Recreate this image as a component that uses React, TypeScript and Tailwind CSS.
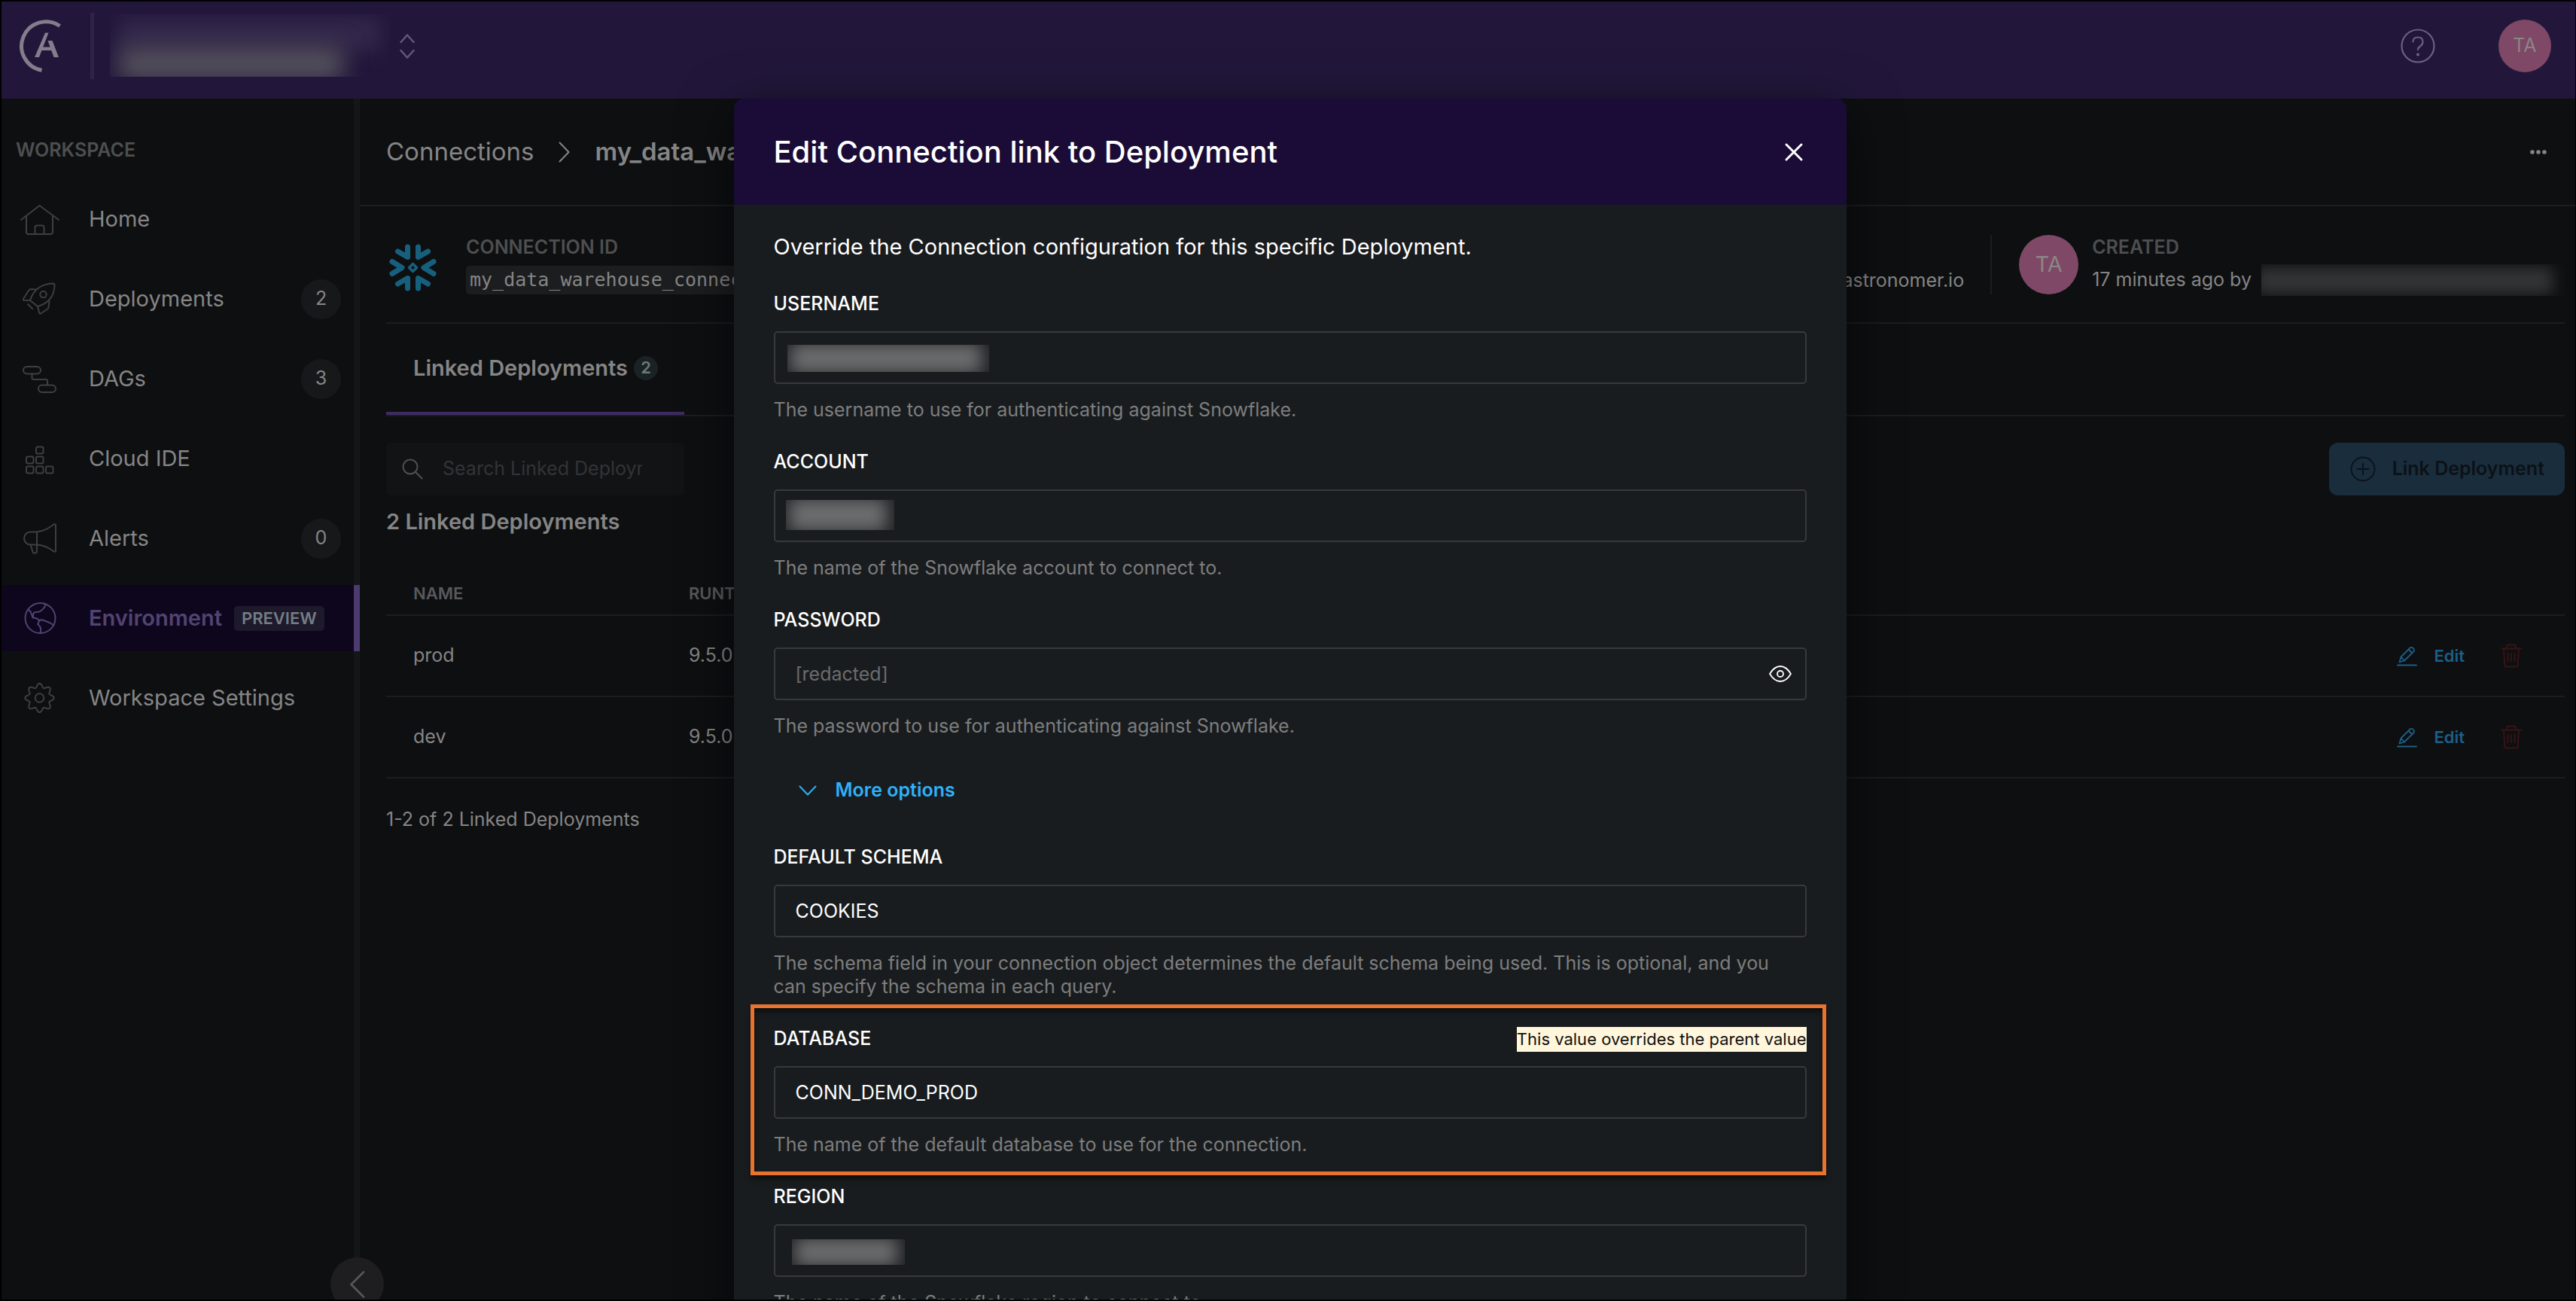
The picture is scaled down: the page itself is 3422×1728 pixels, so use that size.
import type { ReactNode } from 'react';

function Icon({ children, className = 'size-[52px]' }: { children: ReactNode; className?: string }) {
  return (
    <svg
      viewBox="0 0 52 52"
      className={className}
      fill="none"
      stroke="currentColor"
      strokeWidth="2"
      strokeLinecap="round"
      strokeLinejoin="round"
      aria-hidden="true"
    >
      {children}
    </svg>
  );
}

const gearPath =
  Array.from({ length: 160 }, (_, i) => {
    const angle = (i / 160) * Math.PI * 2;
    const radius = 16.6 + 2.6 * Math.cos(8 * angle);
    const x = (25.5 + radius * Math.sin(angle)).toFixed(2);
    const y = (26 - radius * Math.cos(angle)).toFixed(2);
    return `${i === 0 ? 'M' : 'L'}${x} ${y}`;
  }).join('') + 'Z';

const icons = {
  home: (
    <>
      <path d="M1 27 25.500 8 51 27" />
      <path d="M8 22v21q0 3 3 3h29q3 0 3-3V22" />
      <path d="M19.500 46V37q0-2.500 2.500-2.500h7q2.500 0 2.500 2.500v9" />
    </>
  ),
  rocket: (
    <>
      <path d="M13 28C17 15 27 6 43 5.500q2.500 0 2.500 2.500C45 23 37 32 23 36Z" />
      <circle cx="30.500" cy="20" r="4.200" />
      <path d="M21 13.500 14 13q-2 0-3 2L4 26q-.5 1.500 1 1.700l8 .3" />
      <path d="M38.500 29 37.500 37q0 1.500-1.500 2.500l-9 6q-1.500.5-1.800-1L23 36" />
      <path d="m10 33 6 6" />
    </>
  ),
  dag: (
    <>
      <rect x="4" y="10" width="23" height="9.500" rx="4.700" />
      <rect x="24" y="34.500" width="23" height="9.500" rx="4.700" />
      <path d="M15.500 19.500V25q0 2 2 2H34q2 0 2 2v5.500" />
    </>
  ),
  blocks: (
    <>
      <rect x="21" y="10.500" width="9.500" height="9" rx="2" />
      <rect x="8" y="23.500" width="9.500" height="9" rx="2" />
      <rect x="21" y="23.500" width="9.500" height="9" rx="2" />
      <rect x="8" y="36.500" width="9.500" height="9" rx="2" />
      <rect x="21" y="36.500" width="9.500" height="9" rx="2" />
      <rect x="34" y="36.500" width="9.500" height="9" rx="2" />
    </>
  ),
  horn: (
    <>
      <path d="M22 17.500C32 16.500 38 12 44.500 7.500Q47 6.500 47 9v33q0 2.500-2.500 1.500C38 38.500 32 35 22 34.500H13.500a8.500 8.500 0 0 1 0-17Z" />
      <path d="M22 17.500V34.500" />
      <path d="m13.500 34.500 3 9.500q.5 2 2.500 1.800Q22 45.500 22 43v-8.500" />
    </>
  ),
  globe: (
    <>
      <circle cx="26.500" cy="26" r="20" />
      <path d="M9.500 15q3 0 4.500 3.500l2.500 7q1-1 .5-4 0-3 4-3.500 4 0 6-1.500 3-2 5-5 3-3-1-5" />
      <path d="M44.500 35.500Q38 31 31 29q-3-1.500-5 0-2-.5-4-2.500l-4.500-1M26 29q-2 1-2 3t-1 2q4 3 4 6 .5 3-.5 6" />
    </>
  ),
  gear: (
    <>
      <path d={gearPath} />
      <circle cx="25.500" cy="26" r="5.800" />
    </>
  ),
};

type NavItem = { label: string; icon: ReactNode; count?: number; active?: boolean };

const navItems: NavItem[] = [
  { label: 'Home', icon: icons.home },
  { label: 'Deployments', icon: icons.rocket, count: 2 },
  { label: 'DAGs', icon: icons.dag, count: 3 },
  { label: 'Cloud IDE', icon: icons.blocks },
  { label: 'Alerts', icon: icons.horn, count: 0 },
  { label: 'Environment', icon: icons.globe, active: true },
  { label: 'Workspace Settings', icon: icons.gear },
];

function Logo() {
  return (
    <svg viewBox="0 0 56 72" className="h-[72px] w-14" fill="none" aria-label="Astronomer" role="img">
      <path d="M54.500 9.500A32.500 32.500 0 1 0 30.500 68.300" stroke="#847d8c" strokeWidth="5" />
      <path d="M35 18.500h4.500L27 51h-6Z M38.500 29h6L53 51h-6.500Z M28 37.500h18v4.500H26Z" fill="#847d8c" />
    </svg>
  );
}

function SnowflakeLogo() {
  return (
    <svg viewBox="0 0 65 65" className="mt-2 ml-[3px] size-[65px] shrink-0 text-[#17607d]" fill="none" stroke="currentColor" strokeWidth="7" strokeLinecap="round" strokeLinejoin="round" aria-hidden="true">
      <path d="M25.500 5v13.500L12.500 11M39.500 5v13.500L52.500 11" />
      <path d="M25.500 60V46.500L12.500 54M39.500 60V46.500L52.500 54" />
      <path d="M5 24.500 18 32.500 5 40.500M60 24.500 47 32.500 60 40.500" />
      <path d="m32.500 27.500 5 5-5 5-5-5Z" strokeWidth="3.500" />
    </svg>
  );
}

function Avatar({ className }: { className: string }) {
  return (
    <span className={`flex shrink-0 items-center justify-center rounded-full bg-[#7e4866] text-[#8c8585] ${className}`}>
      TA
    </span>
  );
}

function TopBar() {
  return (
    <header className="flex h-[129px] shrink-0 items-center bg-[#22173b] pr-8 pb-3 pl-[23px]">
      <Logo />
      <div className="ml-[39px] h-22 w-[5px] bg-[#2f2447]" />
      <div className="relative ml-[21px] h-[83px] w-[372px] overflow-hidden">
        <div className="absolute inset-x-3 top-1 h-11 bg-[#33274a] blur-[12px]" />
        <div className="absolute top-[44px] right-[62px] left-3 h-11 bg-[#54515c] blur-[15px]" />
      </div>
      <button type="button" aria-label="Switch organization" className="ml-[13px] text-[#63577a]">
        <svg viewBox="0 0 20 34" className="h-[34px] w-5" fill="none" stroke="currentColor" strokeWidth="2.500" strokeLinecap="round" strokeLinejoin="round">
          <path d="m1.500 12 8.500-9.500 8.500 9.500M1.500 23 10 32.500 18.500 23" />
        </svg>
      </button>
      <button type="button" aria-label="Help" className="ml-auto text-[#6c6080]">
        <svg viewBox="0 0 46 46" className="size-[46px]" fill="none" stroke="currentColor" strokeWidth="2.200" strokeLinecap="round">
          <circle cx="23" cy="23" r="21.500" />
          <path d="M16.500 17.500q0-6 6.500-6t6.500 6q0 3.500-3.500 6-3 2-3 4.500" />
          <circle cx="23" cy="34.500" r="1" fill="currentColor" stroke="currentColor" />
        </svg>
      </button>
      <Avatar className="ml-[84px] size-[70px] text-[25px]" />
    </header>
  );
}

function Sidebar() {
  return (
    <aside className="relative w-[476px] shrink-0 border-r-8 border-[#151617] bg-[#0e0f11] pt-[52px]">
      <h2 className="mb-8 pl-[19px] text-[25px] leading-8 font-semibold text-[#4d4f50]">WORKSPACE</h2>
      <nav className="-mr-2 flex flex-col gap-[18px]">
        {navItems.map((item) => (
          <a
            key={item.label}
            href="#"
            className={`flex h-[88px] items-center border-r-8 pr-[17px] pl-[25px] text-[29px] ${
              item.active ? 'border-[#4d3a6e] bg-[#0e061d] font-semibold text-[#514372]' : 'border-transparent text-[#858585]'
            }`}
          >
            <span className={item.active ? 'text-[#514372]' : 'text-[#3d3f40]'}>
              <Icon>{item.icon}</Icon>
            </span>
            <span className="ml-[39px]">{item.label}</span>
            {item.active && (
              <span className="ml-4 flex h-[33px] items-center rounded-[5px] bg-[#1e192b] px-2.5 text-[22px] font-semibold text-[#737d85]">
                PREVIEW
              </span>
            )}
            {item.count !== undefined && (
              <span className="ml-auto flex size-[53px] items-center justify-center rounded-full bg-[#17181a] text-[25px]">
                {item.count}
              </span>
            )}
          </a>
        ))}
      </nav>
      <button
        type="button"
        aria-label="Collapse sidebar"
        className="absolute -right-10 -bottom-[15px] z-10 flex size-[71px] items-center justify-center rounded-full bg-[#1e1e20] text-[#58585a]"
      >
        <svg viewBox="0 0 20 36" className="h-9 w-5" fill="none" stroke="currentColor" strokeWidth="2.500" strokeLinecap="round" strokeLinejoin="round">
          <path d="M18 1.500 1.500 18 18 34.500" />
        </svg>
      </button>
    </aside>
  );
}

function RowActions() {
  return (
    <div className="flex items-center justify-end pr-[57px]">
      <button type="button" className="flex items-center gap-[22px] text-[22px] font-semibold text-[#1b5f87]">
        <svg viewBox="0 0 27 27" className="size-[27px]" fill="none" stroke="currentColor" strokeWidth="1.800" strokeLinecap="round" strokeLinejoin="round" aria-hidden="true">
          <path d="M1 25.500h25M3.500 21.500l2-7L17.500 2.500q2-1.500 4.300.5 2 2.300.5 4.300L10 19.500Zm2-7 4.500 5M15.500 4.500l5 5" />
        </svg>
        Edit
      </button>
      <button type="button" aria-label="Delete" className="ml-12 text-[#3a1415]">
        <svg viewBox="0 0 28 32" className="h-8 w-7" fill="none" stroke="currentColor" strokeWidth="1.800" strokeLinecap="round" strokeLinejoin="round">
          <path d="M1 6.500h26M8 6.500V4q0-2.500 2.500-2.500h7Q20 1.500 20 4v2.500M4 6.500l1.200 22q.1 2 2 2h13.600q1.900 0 2-2L24 6.500M9.500 13v10M14 13v10M18.500 13v10" />
        </svg>
      </button>
    </div>
  );
}

const deployments = [
  { name: 'prod', runtime: '9.5.0' },
  { name: 'dev', runtime: '9.5.0' },
];

function Main() {
  return (
    <main className="min-w-0 flex-1 bg-[#0e0f11] text-[#858585]">
      <div className="flex h-[143px] items-center border-b-2 border-[#1c1d1f] pr-[38px] pl-[35px] text-[33px] whitespace-nowrap">
        <a href="#">Connections</a>
        <svg viewBox="0 0 15 28" className="mr-[33px] ml-[33px] h-7 w-[15px]" fill="none" stroke="currentColor" strokeWidth="2" strokeLinecap="round" strokeLinejoin="round" aria-hidden="true">
          <path d="m1.500 1.500 12 12.500-12 12.500" />
        </svg>
        <span className="font-semibold">my_data_warehouse_connection</span>
        <button type="button" aria-label="More actions" className="ml-auto">
          <svg viewBox="0 0 22 8" className="h-2 w-[22px]" fill="currentColor">
            <circle cx="3" cy="4" r="2.800" />
            <circle cx="11" cy="4" r="2.800" />
            <circle cx="19" cy="4" r="2.800" />
          </svg>
        </button>
      </div>

      <div className="pr-3.5 pl-[35px]">
        <section className="flex h-[156px] items-center border-b-2 border-[#1c1d1f] text-[25px] whitespace-nowrap">
          <SnowflakeLogo />
          <div className="ml-[38px] flex flex-col items-start gap-[9px]">
            <span className="leading-8 font-semibold text-[#4d4f50]">CONNECTION ID</span>
            <code className="flex h-[38px] items-center rounded-[5px] bg-[#1c1d1f] px-[5px] font-['DejaVu_Sans_Mono',monospace] text-[25px]">
              my_data_warehouse_connection
            </code>
          </div>
          <span className="mt-[41px] ml-auto leading-[38px]">astronomer.io</span>
          <div className="mr-9 ml-[35px] h-[79px] w-0.5 bg-[#1c1d1f]" />
          <Avatar className="size-[79px] text-[29px]" />
          <div className="ml-[18px] flex flex-col gap-[9px]">
            <span className="leading-8 font-semibold text-[#4d4f50]">CREATED</span>
            <span className="flex h-[38px] items-center">
              17 minutes ago by
              <span className="relative ml-[13px] block h-[42px] w-[403px] overflow-hidden">
                <span className="absolute top-1 right-4 -left-2 block h-9 bg-[#343536] blur-[10px]" />
              </span>
            </span>
          </div>
        </section>

        <div role="tablist" className="flex h-[123px] border-b-2 border-[#1c1d1f]">
          <button type="button" role="tab" aria-selected="true" className="flex items-center gap-2 border-b-4 border-[#3f2b63] pr-[35px] pl-9 text-[29px] font-semibold">
            Linked Deployments
            <span className="flex size-8 items-center justify-center rounded-full bg-[#1b2223] text-[22px] text-[#6a7a78]">2</span>
          </button>
        </div>

        <div className="mt-[35px] flex justify-between">
          <label className="flex h-[70px] w-[396px] items-center rounded-[5px] bg-[#121315] pr-14 pl-[21px] text-[#4f5152]">
            <span className="sr-only">Search Linked Deployments</span>
            <svg viewBox="0 0 28 28" className="size-7 shrink-0" fill="none" stroke="currentColor" strokeWidth="2" strokeLinecap="round" aria-hidden="true">
              <circle cx="11" cy="11" r="9.500" />
              <path d="m18 18 8.500 8.500" />
            </svg>
            <input type="text" placeholder="Search Linked Deployments" className="ml-[26px] w-full min-w-0 bg-transparent text-[25px] placeholder:text-[#333435]" />
          </label>
          <button type="button" className="flex h-[70px] items-center gap-[22px] rounded-xl bg-[#192d3d] pr-[27px] pl-7 text-[25px] font-semibold text-[#0d1116]">
            <svg viewBox="0 0 34 34" className="size-[34px]" fill="none" stroke="currentColor" strokeWidth="1.800" strokeLinecap="round" aria-hidden="true">
              <circle cx="17" cy="17" r="15.500" />
              <path d="M9.500 17h15M17 9.500v15" />
            </svg>
            Link Deployment
          </button>
        </div>

        <h3 className="mt-[18px] text-[29px] leading-[34px] font-semibold">2 Linked Deployments</h3>

        <table className="mt-[51px] w-full border-collapse text-left text-[25px]">
          <thead>
            <tr className="h-14 border-b-2 border-[#1c1d1f] text-[22px] text-[#58595b]">
              <th scope="col" className="w-[402px] pl-9 font-semibold">NAME</th>
              <th scope="col" className="font-semibold">RUNTIME</th>
              <th scope="col" aria-label="Actions" />
            </tr>
          </thead>
          <tbody>
            {deployments.map((deployment) => (
              <tr key={deployment.name} className="h-[108px] border-b-2 border-[#1c1d1f]">
                <td className="pl-9">{deployment.name}</td>
                <td>{deployment.runtime}</td>
                <td>
                  <RowActions />
                </td>
              </tr>
            ))}
          </tbody>
        </table>
        <p className="mt-[38px] text-[25px] leading-8">1-2 of 2 Linked Deployments</p>
      </div>
    </main>
  );
}

type FieldProps = {
  id: string;
  label: string;
  help: string;
  value?: string;
  placeholder?: string;
  type?: string;
  badge?: string;
  mask?: ReactNode;
  trailing?: ReactNode;
};

function Field({ id, label, help, value, placeholder, type = 'text', badge, mask, trailing }: FieldProps) {
  return (
    <div>
      <div className="mb-5 flex h-8 items-center justify-between">
        <label htmlFor={id} className="text-[25px] font-medium text-white">
          {label}
        </label>
        {badge && <span className="bg-[#fff6db] text-[22px] leading-[33px] text-[#111111]">{badge}</span>}
      </div>
      <div className="relative">
        <input
          id={id}
          type={type}
          defaultValue={value}
          placeholder={placeholder}
          className="block h-[70px] w-full rounded-[5px] border-2 border-[#37393c] bg-transparent px-[27px] text-[25px] text-white placeholder:text-[#6b6c6d]"
        />
        {mask}
        {trailing}
      </div>
      <p className="mt-[19px] text-[25px] leading-[31px] text-[#7d7e7f]">{help}</p>
    </div>
  );
}

function Mask({ className }: { className: string }) {
  return (
    <div className={`absolute overflow-hidden bg-[#1f2123] ${className}`}>
      <div className="absolute -inset-y-0.5 right-2.5 left-1 bg-[#6c6d6e] blur-[11px]" />
    </div>
  );
}

function EditModal() {
  return (
    <div className="absolute inset-0 z-20 flex justify-center overflow-hidden pt-[129px] pl-1">
      <form
        role="dialog"
        aria-label="Edit Connection link to Deployment"
        className="h-[1700px] w-[1478px] shrink-0 overflow-hidden rounded-t-[14px] bg-[#191c1e] text-white shadow-[0_16px_70px_rgba(0,0,0,0.6)]"
      >
        <div className="flex h-[141px] items-center justify-between bg-[#1a0c36] pr-[57px] pl-[53px]">
          <h1 className="text-[40px] font-medium">Edit Connection link to Deployment</h1>
          <button type="button" aria-label="Close">
            <svg viewBox="0 0 26 26" className="size-[26px]" fill="none" stroke="currentColor" strokeWidth="3" strokeLinecap="round">
              <path d="m3 3 20 20M23 3 3 23" />
            </svg>
          </button>
        </div>
        <div className="flex flex-col pt-10 pr-[53px] pl-[53px]">
          <p className="mb-11 text-[29px] leading-8">Override the Connection configuration for this specific Deployment.</p>
          <div className="flex flex-col gap-[38px]">
            <Field id="username" label="USERNAME" help="The username to use for authenticating against Snowflake." mask={<Mask className="top-[18px] left-[18px] h-9 w-[268px]" />} />
            <Field id="account" label="ACCOUNT" help="The name of the Snowflake account to connect to." mask={<Mask className="top-[14px] left-4 h-10 w-36" />} />
            <Field
              id="password"
              type="password"
              label="PASSWORD"
              placeholder="[redacted]"
              help="The password to use for authenticating against Snowflake."
              trailing={
                <button type="button" aria-label="Show password" className="absolute inset-y-0 right-5 flex items-center">
                  <svg viewBox="0 0 30 24" className="h-6 w-[30px]" fill="none" stroke="currentColor" strokeWidth="1.800" strokeLinejoin="round">
                    <path d="M1 12Q7 2 15 2t14 10Q23 22 15 22T1 12Z" />
                    <circle cx="15" cy="12" r="4" />
                  </svg>
                </button>
              }
            />
          </div>
          <button type="button" className="mt-[46px] mb-[49px] flex h-12 items-center gap-[25px] self-start pl-[33px] text-[25px] font-semibold text-[#2fb1f8]">
            <svg viewBox="0 0 24 14" className="h-3.5 w-6" fill="none" stroke="currentColor" strokeWidth="2" strokeLinecap="round" strokeLinejoin="round" aria-hidden="true">
              <path d="m1.500 1.500 10.500 11 10.500-11" />
            </svg>
            More options
          </button>
          <div className="flex flex-col gap-[38px]">
            <Field
              id="schema"
              label="DEFAULT SCHEMA"
              value="COOKIES"
              help="The schema field in your connection object determines the default schema being used. This is optional, and you can specify the schema in each query."
            />
            <div className="relative">
              <Field
                id="database"
                label="DATABASE"
                value="CONN_DEMO_PROD"
                badge="This value overrides the parent value"
                help="The name of the default database to use for the connection."
              />
              <div className="pointer-events-none absolute -top-[30px] -right-[26px] -bottom-[25px] -left-[31px] border-5 border-[#e8732f] shadow-[0_5px_6px_rgba(0,0,0,0.5),inset_0_5px_6px_rgba(0,0,0,0.5)]" />
            </div>
            <Field id="region" label="REGION" help="The name of the Snowflake region to connect to." mask={<Mask className="top-[20px] left-6 h-[34px] w-[150px]" />} />
          </div>
        </div>
      </form>
    </div>
  );
}

export default function App() {
  return (
    <div className="h-screen overflow-hidden bg-black py-0.5 pr-px pl-0.5 font-['Inter',sans-serif]">
      <div className="relative flex h-full flex-col overflow-hidden">
        <TopBar />
        <div className="flex min-h-0 flex-1">
          <Sidebar />
          <Main />
        </div>
        <EditModal />
      </div>
    </div>
  );
}
